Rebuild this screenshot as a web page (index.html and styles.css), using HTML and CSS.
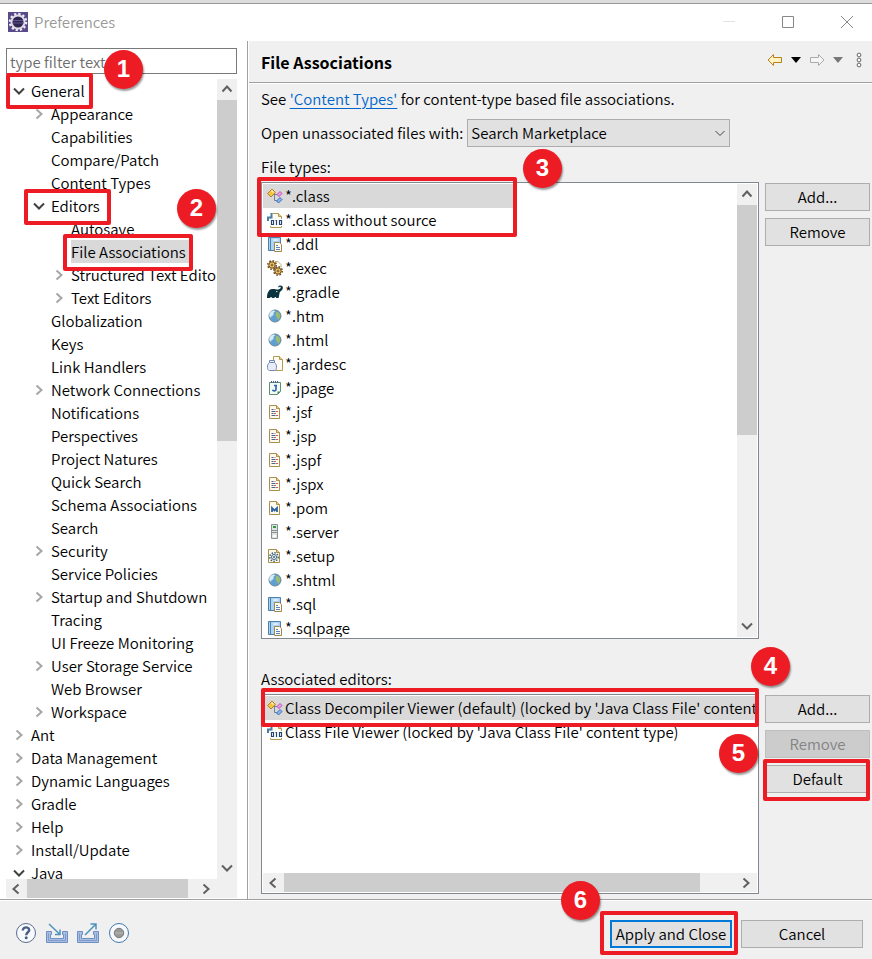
FILE: index.html
```
<!DOCTYPE html>
<html lang="en">
  <head>
    <meta charset="UTF-8" />
    <meta name="viewport" content="width=device-width, initial-scale=1.0" />
    <title>Preferences</title>
    <link rel="stylesheet" href="styles.css">
  </head>
  <body>
    <!-- icon set -->
    <svg class="icon-set" aria-hidden="true">
      <symbol id="right" viewBox="0 0 16 16"><path d="M5.5 3.5 10.5 8l-5 4.5" fill="none" stroke="currentColor" stroke-width="2"/></symbol>
      <symbol id="left" viewBox="0 0 16 16"><path d="M10.5 3.5 5.5 8l5 4.5" fill="none" stroke="currentColor" stroke-width="2"/></symbol>
      <symbol id="down" viewBox="0 0 16 16"><path d="M3 5.500 8 10.500l5-5" fill="none" stroke="currentColor" stroke-width="2"/></symbol>
      <symbol id="up" viewBox="0 0 16 16"><path d="M3.500 10.500 8 5.500l4.500 5" fill="none" stroke="currentColor" stroke-width="2"/></symbol>
      <symbol id="class" viewBox="0 0 16 16">
        <path d="M7 6.500h4M7.500 6.500v6h3" fill="none" stroke="#6d7f99"/>
        <path d="M5 1 8.500 4.500 4 9 .5 5.500z" fill="#f2c243" stroke="#b5832a"/>
        <path d="M4.500 2.500 6.500 4.500" stroke="#fdeeb0" stroke-width="1.500"/>
        <path d="M13 3.500 15 5.500 12 8.500 10 6.500z" fill="#f09ae8" stroke="#b94fb6"/>
        <path d="M13 9.500 15 11.500 11.500 15 9.500 13z" fill="#86b5f0" stroke="#3f6fb8"/>
      </symbol>
      <symbol id="binary" viewBox="0 0 16 16">
        <path d="M5.500 1.500h6l3 3v11h-11v-9" fill="#fffdf3" stroke="#b09a55"/>
        <path d="M11.500 1.500v3h3" fill="#e9cf80" stroke="#b09a55"/>
        <path d="M4.500 1v4.500H1V9" fill="none" stroke="#4a7fa5" stroke-width="2"/>
        <path d="M3 7h13v7H3z" fill="#fff"/>
        <path d="M4.500 8.500h2v4h-2zM8.500 8.500h1v4.500M12.500 8.500h2v4h-2z" fill="none" stroke="#24466f" stroke-width="1.200"/>
      </symbol>
      <symbol id="sql" viewBox="0 0 16 16">
        <path d="M1.500 1.500h12v13h-12z" fill="#aed4f2" stroke="#4c80ad"/>
        <path d="M3.500 1.500v13" stroke="#4c80ad"/>
        <path d="M6 4h5" stroke="#fff"/>
        <path d="M7.500 6.500h5l2 2v7h-7z" fill="#fffdf3" stroke="#9b8650"/>
        <path d="M9 9.500h2M9 11.500h4M9 13.500h4" stroke="#5b83b8"/>
      </symbol>
      <symbol id="exec" viewBox="0 0 16 16">
        <path d="M8 1.500h3l3 3v3" fill="#fffdf3" stroke="#c5b27c"/>
        <g stroke="#6b4416">
          <circle cx="5" cy="5" r="4.200" fill="none" stroke-width="1.500" stroke-dasharray="1.600 1.700"/>
          <circle cx="5" cy="5" r="3.200" fill="#f7cf68"/>
          <circle cx="5" cy="5" r="1" fill="#fff"/>
          <circle cx="11" cy="11" r="4.200" fill="none" stroke-width="1.500" stroke-dasharray="1.600 1.700"/>
          <circle cx="11" cy="11" r="3.200" fill="#f7cf68"/>
          <circle cx="11" cy="11" r="1" fill="#fff"/>
        </g>
      </symbol>
      <symbol id="gradle" viewBox="0 0 16 16">
        <path d="M0 14C0 8.500 2 5.500 5 5c2.500-.5 4 .8 6 .5 1.300-.2 2.700-1 2.800-2 0-.8-1.200-1-1.500-.2-.8.300-1.300 0-1-.7.800-1.700 4.700-1.300 4.600 1.200-.1 3-3 3.500-3.300 5-.3 1.700-.5 3-1 5.200H9.300c-.2-1.500-1.700-1.500-2 0H5c-.2-1.500-1.700-1.500-2 0z" fill="#0b343e"/>
        <circle cx="9.800" cy="7.600" r=".7" fill="#fff"/>
      </symbol>
      <symbol id="globe" viewBox="0 0 16 16">
        <circle cx="8" cy="8" r="6" fill="#5f9fd2" stroke="#6d8797"/>
        <path d="M3 4.500C5 2 7.500 2 8 3c.3 1-2 1.500-1.500 3S4 8 3.500 10C2 8.500 2 6 3 4.500z" fill="#d5eaf8"/>
        <path d="M9 4.500c2-1 3 0 4 2 .6 2-.5 4.500-2 5.500-1-1-.5-2-1.500-3S8 6 9 4.500z" fill="#9cba72"/>
      </symbol>
      <symbol id="jar" viewBox="0 0 16 16">
        <path d="M6.500.5h6l3 3v11h-9z" fill="#fffdf3" stroke="#b09a55"/>
        <path d="M12.500.5v3h3" fill="#e9cf80" stroke="#b09a55"/>
        <path d="M2.500 4.500h5v2c3 2 2.500 8 0 8h-5c-2.500 0-3-6 0-8z" fill="#e6edf9" stroke="#7289b5"/>
        <path d="M2.500 6.500h5" stroke="#7289b5"/>
      </symbol>
      <symbol id="jpage" viewBox="0 0 16 16">
        <path d="M2.500 2.500h11v9l-3 3h-8z" fill="#f4fbf6" stroke="#5f8f78"/>
        <path d="M13.500 11.500h-3v3z" fill="#3c8a52"/>
        <path d="M4.500 1v2M6.500 1v2M8.500 1v2M10.500 1v2" stroke="#46658f"/>
        <path d="M7 5.500h3M9 5v4.500c0 1.800-3 1.800-3.500.2" fill="none" stroke="#2b62a8" stroke-width="1.600"/>
      </symbol>
      <symbol id="page" viewBox="0 0 16 16">
        <path d="M2.500 1.500h7l3 3v10h-10z" fill="#fdfbef" stroke="#a98f4c"/>
        <path d="M9.500 1.500v3h3" fill="#e9cf80" stroke="#a98f4c"/>
        <path d="M4.500 5.500h2M4.500 7.500h4M4.500 9.500h2M4.500 11.500h4" stroke="#44638f"/>
        <path d="M7.500 5.500h1M9 7.500h2M7 9.500h2M9 11.500h2" stroke="#c75a55"/>
      </symbol>
      <symbol id="maven" viewBox="0 0 16 16">
        <path d="M2.500 1.500h7l3 3v10h-10z" fill="#fdfbef" stroke="#a98f4c"/>
        <path d="M9.500 1.500v3h3" fill="#e9cf80" stroke="#a98f4c"/>
        <path d="M5 12V8l2.500 2.500L10 8v4" fill="none" stroke="#2d63a5" stroke-width="1.800"/>
      </symbol>
      <symbol id="server" viewBox="0 0 16 16">
        <path d="M4.500.5h6v14h-6z" fill="#dfe3e4" stroke="#8a9291"/>
        <path d="M6 3h3" stroke="#2f9c3c" stroke-width="2"/>
        <path d="M5 6.500h5M5 8.500h5" stroke="#8a9291"/>
        <path d="M6 12h3" stroke="#fff" stroke-width="2"/>
      </symbol>
      <symbol id="setup" viewBox="0 0 16 16">
        <path d="M1.500 1.500h8l3 3v10h-11z" fill="#fdfbef" stroke="#a98f4c"/>
        <path d="M9.500 1.500v3h3" fill="#e9cf80" stroke="#a98f4c"/>
        <circle cx="7" cy="9" r="2.500" fill="none" stroke="#396080"/>
        <circle cx="7" cy="9" r="4.200" fill="none" stroke="#396080" stroke-width="1.500" stroke-dasharray="1.500 1.300"/>
        <circle cx="7" cy="9" r="1" fill="#396080"/>
      </symbol>
    </svg>

    <div class="window">
      <header class="title-bar">
        <svg class="app-icon" viewBox="0 0 20 20">
          <rect width="20" height="20" fill="#5a4a8a"/>
          <circle cx="10" cy="10" r="8" fill="none" stroke="#f1eff5" stroke-width="2.500" stroke-dasharray="2.200 2"/>
          <circle cx="10" cy="10" r="6.500" fill="#2f2552" stroke="#dedbe6" stroke-width="2"/>
          <path d="M5 8.500h10M4.500 11h11" stroke="#62578c"/>
        </svg>
        <h1>Preferences</h1>
        <div class="window-buttons">
          <button type="button" aria-label="Minimize"><svg viewBox="0 0 14 14"><path d="M1 6.500h12" stroke="#e4e4e4"/></svg></button>
          <button type="button" aria-label="Maximize"><svg viewBox="0 0 14 14"><path d="M1.500 1.500h11v11h-11z" fill="none" stroke="#888"/></svg></button>
          <button type="button" aria-label="Close"><svg viewBox="0 0 14 14"><path d="m1 1 12 12M13 1 1 13" stroke="#888"/></svg></button>
        </div>
      </header>

      <div class="body">
        <nav class="sidebar">
          <input type="text" class="filter" placeholder="type filter text" aria-label="Filter" />
          <div class="tree-wrap">
            <div class="tree">
              <ul>
                <li><span class="open"><svg><use href="#down"/></svg>General</span>
                  <ul>
                    <li><span><svg><use href="#right"/></svg>Appearance</span></li>
                    <li><span>Capabilities</span></li>
                    <li><span>Compare/Patch</span></li>
                    <li><span>Content Types</span></li>
                    <li><span class="open"><svg><use href="#down"/></svg>Editors</span>
                      <ul>
                        <li><span>Autosave</span></li>
                        <li><span><mark>File Associations</mark></span></li>
                        <li><span><svg><use href="#right"/></svg>Structured Text Editors</span></li>
                        <li><span><svg><use href="#right"/></svg>Text Editors</span></li>
                      </ul>
                    </li>
                    <li><span>Globalization</span></li>
                    <li><span>Keys</span></li>
                    <li><span>Link Handlers</span></li>
                    <li><span><svg><use href="#right"/></svg>Network Connections</span></li>
                    <li><span>Notifications</span></li>
                    <li><span>Perspectives</span></li>
                    <li><span>Project Natures</span></li>
                    <li><span>Quick Search</span></li>
                    <li><span>Schema Associations</span></li>
                    <li><span>Search</span></li>
                    <li><span><svg><use href="#right"/></svg>Security</span></li>
                    <li><span>Service Policies</span></li>
                    <li><span><svg><use href="#right"/></svg>Startup and Shutdown</span></li>
                    <li><span>Tracing</span></li>
                    <li><span>UI Freeze Monitoring</span></li>
                    <li><span><svg><use href="#right"/></svg>User Storage Service</span></li>
                    <li><span>Web Browser</span></li>
                    <li><span><svg><use href="#right"/></svg>Workspace</span></li>
                  </ul>
                </li>
                <li><span><svg><use href="#right"/></svg>Ant</span></li>
                <li><span><svg><use href="#right"/></svg>Data Management</span></li>
                <li><span><svg><use href="#right"/></svg>Dynamic Languages</span></li>
                <li><span><svg><use href="#right"/></svg>Gradle</span></li>
                <li><span><svg><use href="#right"/></svg>Help</span></li>
                <li><span><svg><use href="#right"/></svg>Install/Update</span></li>
                <li><span class="open"><svg><use href="#down"/></svg>Java</span></li>
              </ul>
            </div>
            <div class="scroll-y">
              <svg><use href="#up"/></svg>
              <div class="track"><div class="thumb thumb-tree-y"></div></div>
              <svg><use href="#down"/></svg>
            </div>
            <div class="scroll-x">
              <svg><use href="#left"/></svg>
              <div class="track"><div class="thumb thumb-tree-x"></div></div>
              <svg><use href="#right"/></svg>
            </div>
            <div class="corner"></div>
            <div class="outline outline-general"></div>
            <div class="outline outline-editors"></div>
            <div class="outline outline-associations"></div>
            <div class="badge badge-1">1</div>
            <div class="badge badge-2">2</div>
          </div>
        </nav>

        <main class="page">
          <div class="page-header">
            <h2>File Associations</h2>
            <div class="page-tools">
              <button type="button" aria-label="Back"><svg width="16" height="16" viewBox="0 0 16 16"><path d="M1 8 6.500 2.500v3H14.500v5H6.500v3z" fill="#fff3c4" stroke="#b9801f" stroke-linejoin="round"/></svg></button>
              <button type="button" aria-label="Back history"><svg width="10" height="6" viewBox="0 0 10 6"><path d="M0 0h10L5 6z" fill="#000"/></svg></button>
              <button type="button" aria-label="Forward"><svg width="16" height="16" viewBox="0 0 16 16"><path d="M15 8 9.500 2.500v3H1.500v5h8v3z" fill="#f5f5f5" stroke="#ababab" stroke-linejoin="round"/></svg></button>
              <button type="button" aria-label="Forward history"><svg width="10" height="6" viewBox="0 0 10 6"><path d="M0 0h10L5 6z" fill="#77777a"/></svg></button>
              <button type="button" class="menu" aria-label="Menu"><svg width="6" height="16" viewBox="0 0 6 16"><g fill="#fff" stroke="#666"><circle cx="3" cy="3" r="1.900"/><circle cx="3" cy="8" r="1.900"/><circle cx="3" cy="13" r="1.900"/></g></svg></button>
            </div>
          </div>

          <div class="page-content">
            <p>See <a href="#">'Content Types'</a> for content-type based file associations.</p>

            <div class="form-row">
              <label for="open-with">Open unassociated files with:</label>
              <div class="select">
                <select id="open-with">
                  <option>Search Marketplace</option>
                </select>
                <svg viewBox="0 0 16 16"><path d="M3.500 6 8 10.500 12.500 6" fill="none" stroke="#444"/></svg>
              </div>
            </div>

            <h3>File types:</h3>
            <div class="list-row list-row-types">
              <div class="list">
                <ul class="items">
                  <li class="selected"><svg><use href="#class"/></svg>*.class</li>
                  <li><svg><use href="#binary"/></svg>*.class without source</li>
                  <li><svg><use href="#sql"/></svg>*.ddl</li>
                  <li><svg><use href="#exec"/></svg>*.exec</li>
                  <li><svg><use href="#gradle"/></svg>*.gradle</li>
                  <li><svg><use href="#globe"/></svg>*.htm</li>
                  <li><svg><use href="#globe"/></svg>*.html</li>
                  <li><svg><use href="#jar"/></svg>*.jardesc</li>
                  <li><svg><use href="#jpage"/></svg>*.jpage</li>
                  <li><svg><use href="#page"/></svg>*.jsf</li>
                  <li><svg><use href="#page"/></svg>*.jsp</li>
                  <li><svg><use href="#page"/></svg>*.jspf</li>
                  <li><svg><use href="#page"/></svg>*.jspx</li>
                  <li><svg><use href="#maven"/></svg>*.pom</li>
                  <li><svg><use href="#server"/></svg>*.server</li>
                  <li><svg><use href="#setup"/></svg>*.setup</li>
                  <li><svg><use href="#globe"/></svg>*.shtml</li>
                  <li><svg><use href="#sql"/></svg>*.sql</li>
                  <li><svg><use href="#sql"/></svg>*.sqlpage</li>
                </ul>
                <div class="scroll-y">
                  <svg><use href="#up"/></svg>
                  <div class="track"><div class="thumb thumb-types"></div></div>
                  <svg><use href="#down"/></svg>
                </div>
                <div class="outline outline-class"></div>
                <div class="badge badge-3">3</div>
              </div>
              <div class="buttons">
                <button type="button" class="btn">Add...</button>
                <button type="button" class="btn">Remove</button>
              </div>
            </div>

            <h3 class="editors-title">Associated editors:</h3>
            <div class="list-row list-row-editors">
              <div class="list list-editors">
                <ul class="items">
                  <li class="selected"><svg><use href="#class"/></svg>Class Decompiler Viewer (default) (locked by 'Java Class File' content</li>
                  <li><svg><use href="#binary"/></svg>Class File Viewer (locked by 'Java Class File' content type)</li>
                </ul>
                <div class="scroll-x">
                  <svg><use href="#left"/></svg>
                  <div class="track"><div class="thumb thumb-editors"></div></div>
                  <svg><use href="#right"/></svg>
                </div>
                <div class="outline outline-viewer"></div>
                <div class="badge badge-4">4</div>
              </div>
              <div class="buttons">
                <button type="button" class="btn">Add...</button>
                <button type="button" class="btn" disabled>Remove</button>
                <div class="marked">
                  <button type="button" class="btn">Default</button>
                  <div class="outline outline-default"></div>
                  <div class="badge badge-5">5</div>
                </div>
              </div>
            </div>
          </div>
        </main>
      </div>

      <footer class="footer">
        <div class="footer-tools">
          <button type="button" aria-label="Help"><svg viewBox="0 0 22 22"><circle cx="11" cy="11" r="9.500" fill="#f8f9fc" stroke="#5a6d8c"/><path d="M7.800 8.500c0-4.300 6.700-4 6.400-.3-.2 2-3 2.300-3 5" fill="none" stroke="#4a5f86" stroke-width="2.400"/><circle cx="11.200" cy="15.800" r="1.500" fill="#4a5f86"/></svg></button>
          <button type="button" aria-label="Import"><svg viewBox="0 0 22 22"><path d="M.5 9.500h5v3h-1v4h13v-4h-1v-3h5v11H.5z" fill="#a9bfe0" stroke="#6f8fc4"/><path d="M2.500 11.500v7h17v-7" fill="none" stroke="#7d9bcd"/><path d="m3 2 11 10.500M14 7.500v5H9" fill="none" stroke="#4f93bd" stroke-width="1.500"/></svg></button>
          <button type="button" aria-label="Export"><svg viewBox="0 0 22 22"><path d="M.5 9.500h5v3h-1v4h13v-4h-1v-3h5v11H.5z" fill="#a9bfe0" stroke="#6f8fc4"/><path d="M2.500 11.500v7h17v-7" fill="none" stroke="#7d9bcd"/><path d="M8 13 18.500 2.500M13.500 2H19v5.500" fill="none" stroke="#4f93bd" stroke-width="1.500"/></svg></button>
          <button type="button" aria-label="Record"><svg viewBox="0 0 22 22"><circle cx="11" cy="11" r="9.500" fill="#f8f9fc" stroke="#3f78ae"/><circle cx="11" cy="11" r="4.700" fill="#999" stroke="#777"/><path d="M7 11h8" stroke="#bbb"/></svg></button>
        </div>
        <div class="marked">
          <button type="submit" class="btn btn-wide btn-default">Apply and Close</button>
          <div class="outline outline-apply"></div>
          <div class="badge badge-6">6</div>
        </div>
        <button type="button" class="btn btn-wide">Cancel</button>
      </footer>
    </div>
  </body>
</html>
```
FILE: styles.css
```
* {
  box-sizing: border-box;
}
body, h1, h2, h3, p, ul {
  margin: 0;
  padding: 0;
}
ul {
  list-style: none;
}
body, input, select, button {
  font-family: "Noto Sans CJK KR", "Open Sans", sans-serif;
  font-size: 15px;
  font-weight: 350;
  line-height: 22px;
  color: #000;
}
svg {
  display: block;
  flex: none;
}
.icon-set {
  position: absolute;
  width: 0;
  height: 0;
}

.window {
  display: flex;
  flex-direction: column;
  height: 100vh;
  overflow: hidden;
  background: #f0f0f0;
  border-top: 3px solid #dcdcdc;
}

/* title bar */
.title-bar {
  display: flex;
  align-items: center;
  flex: none;
  height: 38px;
  padding: 0 0 2px 8px;
  border-top: 1px solid #999;
  background: #fff;
}
.app-icon {
  width: 20px;
  height: 20px;
}
.title-bar h1 {
  flex: 1;
  margin-left: 6px;
  font-size: 15px;
  font-weight: 350;
  color: #999;
}
.window-buttons {
  display: flex;
  margin-right: -4px;
}
.window-buttons button {
  width: 59px;
  height: 36px;
  padding: 0;
  border: 0;
  background: none;
}
.window-buttons svg {
  width: 14px;
  height: 14px;
  margin: 0 auto;
}

.body {
  display: grid;
  grid-template-columns: 248px 1fr;
  flex: 1;
  min-height: 0;
}

/* preference tree */
.sidebar {
  display: flex;
  flex-direction: column;
  min-height: 0;
  padding: 7px 10px 1px 6px;
  background: #fff;
  border-right: 1px solid #a0a0a0;
}
.filter {
  flex: none;
  width: 100%;
  height: 26px;
  margin-bottom: 5px;
  padding: 0 3px;
  border: 1px solid #7a7a7a;
  background: #fff;
}
.filter::placeholder {
  color: #6d6d6d;
}
.tree-wrap {
  position: relative;
  display: grid;
  grid-template-columns: minmax(0, 1fr) 20px;
  grid-template-rows: minmax(0, 1fr) 19px;
  flex: 1;
  min-height: 0;
}
.tree {
  overflow: hidden;
  white-space: nowrap;
}
.tree li > span {
  display: flex;
  align-items: center;
  height: 23px;
  padding-left: 25px;
}
.tree li li > span {
  padding-left: 45px;
}
.tree li li li > span {
  padding-left: 65px;
}
.tree svg {
  width: 16px;
  height: 16px;
  margin-left: -20px;
  margin-right: 4px;
  color: #a6a6a6;
}
.tree .open svg {
  color: #404040;
}
.tree mark {
  padding-right: 3px;
  line-height: 23px;
  color: #000;
  background: #d9d9d9;
}

/* scroll bars */
.scroll-y, .scroll-x {
  display: flex;
  align-items: center;
  background: #f0f0f0;
  color: #606060;
}
.scroll-y {
  flex-direction: column;
  width: 20px;
}
.scroll-x {
  height: 19px;
}
.scroll-y svg, .scroll-x svg {
  width: 16px;
  height: 16px;
}
.scroll-y svg {
  margin: 2px 2px 3px;
}
.scroll-x svg {
  margin: 2px 3px 2px 2px;
}
.track {
  flex: 1;
  align-self: stretch;
}
.thumb {
  background: #cdcdcd;
}
.thumb-tree-y {
  height: 45%;
}
.thumb-tree-x {
  width: 95%;
  height: 100%;
}
.thumb-types {
  height: 56%;
}
.thumb-editors {
  width: 92%;
  height: 100%;
}
.corner {
  background: #f0f0f0;
}

/* page */
.page {
  display: flex;
  flex-direction: column;
  min-width: 0;
  min-height: 0;
  border-left: 1px solid #fff;
}
.page-header {
  display: flex;
  align-items: center;
  justify-content: space-between;
  flex: none;
  height: 42px;
  padding: 0 10px 0 12px;
  border-bottom: 1px solid #a0a0a0;
  box-shadow: 0 1px #fff;
}
.page-header h2 {
  font-size: 16px;
  font-weight: bold;
}
.page-tools {
  display: flex;
  align-items: center;
  gap: 8px;
  padding-bottom: 4px;
}
.page-tools button {
  padding: 0;
  border: 0;
  background: none;
}
.page-tools .menu {
  margin-left: 5px;
}
.page-content {
  display: flex;
  flex-direction: column;
  flex: 1;
  min-height: 0;
  padding: 5px 2px 5px 12px;
}
.page-content a {
  color: #0066cc;
  text-underline-offset: 3px;
}
.form-row {
  display: flex;
  align-items: center;
  gap: 4px;
  margin: 9px 0;
}
.select {
  position: relative;
  width: 263px;
}
.select select {
  display: block;
  width: 100%;
  height: 28px;
  padding: 0 3px;
  border: 1px solid #adadad;
  border-radius: 0;
  background: #e1e1e1;
  appearance: none;
}
.select svg {
  position: absolute;
  top: 6px;
  right: 2px;
  width: 16px;
  height: 16px;
  pointer-events: none;
}
.page-content h3 {
  margin-bottom: 4px;
  font-size: 15px;
  font-weight: 350;
}
.page-content .editors-title {
  margin-top: 29px;
}
.list-row {
  display: flex;
  gap: 6px;
}
.list-row-types {
  flex: 1;
  min-height: 0;
}
.list-row-editors {
  flex: none;
  height: 200px;
}
.list {
  position: relative;
  display: flex;
  flex: 1;
  min-width: 0;
  padding: 1px;
  border: 1px solid #828790;
  background: #fff;
}
.list-editors {
  flex-direction: column;
}
.items {
  flex: 1;
  min-width: 0;
  min-height: 0;
  overflow: hidden;
  white-space: nowrap;
}
.items li {
  display: flex;
  align-items: center;
  height: 24px;
  padding-left: 4px;
}
.items svg {
  width: 16px;
  height: 16px;
  margin-right: 2px;
}
.items .selected {
  background: #d9d9d9;
}
.list-row-types .selected {
  width: 252px;
}

/* buttons */
.buttons {
  display: flex;
  flex-direction: column;
  gap: 7px;
  width: 105px;
  padding-top: 1px;
}
.btn {
  display: block;
  width: 100%;
  height: 28px;
  padding: 0;
  border: 1px solid #adadad;
  background: #e1e1e1;
}
.btn:disabled {
  border-color: #bfbfbf;
  background: #ccc;
  color: #838383;
}
.btn-wide {
  width: 122px;
}
.btn-default {
  border: 2px solid #0078d7;
}
.marked {
  position: relative;
}

/* footer */
.footer {
  display: flex;
  align-items: center;
  gap: 9px;
  flex: none;
  height: 60px;
  padding: 8px 9px 0 15px;
  border-top: 1px solid #a0a0a0;
  box-shadow: inset 0 1px #fff;
}
.footer-tools {
  display: flex;
  gap: 9px;
  flex: 1;
  padding-bottom: 2px;
}
.footer-tools button {
  padding: 0;
  border: 0;
  background: none;
}
.footer-tools svg {
  width: 22px;
  height: 22px;
}

/* numbered steps drawn over the dialog */
.outline {
  position: absolute;
  z-index: 1;
  border: 4px solid #ed1c24;
  border-radius: 2px;
  pointer-events: none;
}
.outline-general {
  top: -6px;
  left: 0;
  width: 87px;
  height: 36px;
}
.outline-editors {
  top: 110px;
  left: 18px;
  width: 87px;
  height: 36px;
}
.outline-associations {
  top: 155px;
  left: 57px;
  width: 130px;
  height: 37px;
}
.outline-class {
  top: -6px;
  left: -5px;
  width: 260px;
  height: 60px;
}
.outline-viewer {
  top: -7px;
  left: -1px;
  right: -1px;
  height: 39px;
}
.outline-default {
  top: -6px;
  left: -2px;
  right: 0;
  height: 42px;
}
.outline-apply {
  top: -9px;
  left: -10px;
  right: -6px;
  height: 44px;
}
.badge {
  position: absolute;
  z-index: 2;
  width: 39px;
  height: 39px;
  border-radius: 50%;
  background: #ed1c24;
  box-shadow: 1px 2px 2px rgba(0, 0, 0, 0.4);
  font-family: "Liberation Sans", sans-serif;
  font-size: 24px;
  font-weight: bold;
  line-height: 38px;
  text-align: center;
  color: #fff;
}
.badge-1 {
  top: -29px;
  left: 98px;
}
.badge-2 {
  top: 110px;
  left: 171px;
}
.badge-3 {
  top: -34px;
  left: 261px;
}
.badge-4 {
  top: -48px;
  right: -32px;
}
.badge-5 {
  top: -31px;
  left: -46px;
}
.badge-6 {
  top: -39px;
  left: -49px;
}
```
